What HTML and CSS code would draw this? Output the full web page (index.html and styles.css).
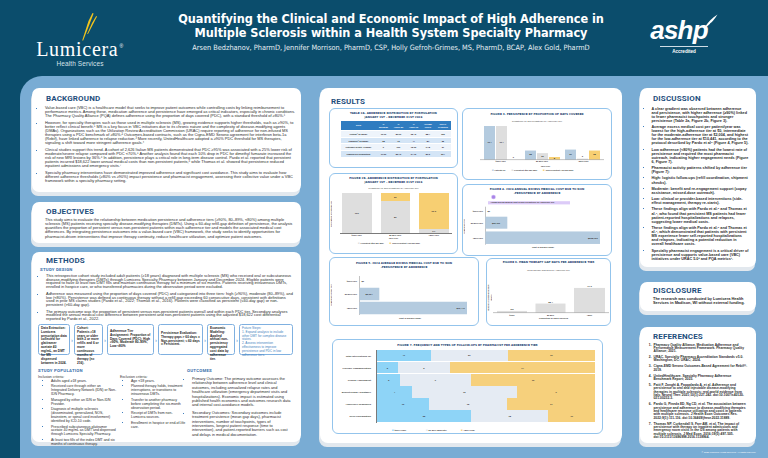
FILE: index.html
```html
<!DOCTYPE html>
<html lang="en">
<head>
<meta charset="utf-8">
<title>Quantifying the Clinical and Economic Impact of High Adherence in MS</title>
<link rel="stylesheet" href="styles.css">
</head>
<body>
<div class="poster">
  <header class="top">
    <div class="logo">
      <svg class="bolt" viewBox="0 0 20 28" width="20" height="28">
        <polygon points="15.5,0 16.6,0.6 6.2,27.5 5.2,27.5 11.5,8" fill="#f4c51c"/>
        <polygon points="19.2,3 20,3.6 11,21 10.2,21 15,10" fill="#f4c51c"/>
      </svg>
      <div class="lumi">Lumicera<span class="reg">®</span></div>
      <div class="hs">Health Services</div>
    </div>
    <div class="titlebox">
      <h1 class="title">Quantifying the Clinical and Economic Impact of High Adherence in<br>Multiple Sclerosis within a Health System Specialty Pharmacy</h1>
      <p class="authors">Arsen Bedzhanov, PharmD, Jennifer Morrison, PharmD, CSP, Holly Gefroh-Grimes, MS, PharmD, BCAP, Alex Gold, PharmD</p>
    </div>
    <div class="ashp">
      <div class="ashp-mark">
        <span class="ashp-word">ashp</span>
        <svg class="quill" viewBox="0 0 14 14" width="14" height="14">
          <path d="M1 13 C4 8 8 4 13.5 0.5 C11 4.5 8 8.5 3 12.5 Z" fill="#fff"/>
          <path d="M6 9.5 L9.5 9" stroke="#0b4d6c" stroke-width="0.7"/>
        </svg>
      </div>
      <div class="acc-line"></div>
      <div class="acc">Accredited</div>
    </div>
  </header>

  <main class="panel">
    <!-- LEFT COLUMN -->
    <section class="col-left">
      <div class="card card-bg">
        <h2 class="h2">BACKGROUND</h2>
        <ul class="bl bg-list">
          <li>Value-based care (VBC) is a healthcare model that seeks to improve patient outcomes while controlling costs by linking reimbursement to performance metrics. Among these, medication adherence and persistence have emerged as critical indicators, especially in chronic conditions. The Pharmacy Quality Alliance (PQA) defines adherence using the proportion of days covered (PDC), with a standard threshold of ≥80%.¹</li>
          <li>However, for specialty therapies such as those used in multiple sclerosis (MS), growing evidence supports higher thresholds, such as ≥90%, to better reflect clinical benefit.⁵ MS is a key focus in VBC initiatives due to its chronic nature and the complexity of disease-modifying agents (DMAs). Organizations such as the Utilization Review Accreditation Commission (URAC) require reporting of adherence for non-infused MS therapies using a PDC benchmark of ≥80%.² Outcomes-based contracts, such as the Cigna-EMD Serono agreement for interferon beta-1a (Rebif), have linked adherence to relapse reduction.³ More recently, UnitedHealthcare adopted a ≥90% PDC threshold for MS therapies, signaling a shift toward more stringent adherence goals.⁴</li>
          <li>Clinical studies support this trend. A cohort of 2,626 Italian MS patients demonstrated that PDC ≥95% was associated with a 25% lower risk of moderate/severe relapse compared with PDC &lt;70%.⁵ Another analysis found that each 10% drop in PDC for dimethyl fumarate increased the risk of new MRI lesions by 36%.⁶ In addition, persistence plays a critical role in long-term disease control. Pardo et al. reported that persistent patients incurred $18,622 lower annual medical costs than non-persistent patients,⁶ while Thomas et al. showed that persistence reduced inpatient admissions and emergency visits.⁷</li>
          <li>Specialty pharmacy interventions have demonstrated improved adherence and significant cost avoidance. This study aims to evaluate how different adherence thresholds (≥80% vs ≥90%) impact persistence and pharmacist engagement, assessing their collective value under a VBC framework within a specialty pharmacy setting.</li>
        </ul>
      </div>

      <div class="card card-obj">
        <h2 class="h2">OBJECTIVES</h2>
        <p class="txt obj-txt">This study aims to evaluate the relationship between medication persistence and adherence tiers (≥90%, 80–89%, &lt;80%) among multiple sclerosis (MS) patients receiving specialty disease-modifying therapies (DMTs). Using a 60-day refill-gap definition of persistence, the analysis quantifies the proportion of persistent versus non-persistent patients within each adherence tier and models the associated medical cost differences. By integrating persistence outcomes into a value-based care (VBC) framework, the study seeks to identify opportunities for pharmacist-driven interventions that improve therapy continuity, reduce healthcare utilization, and optimize patient outcomes.</p>
      </div>

      <div class="card card-meth">
        <h2 class="h2">METHODS</h2>
        <h3 class="h3">STUDY DESIGN</h3>
        <ul class="bl sd-list">
          <li>This retrospective cohort study included adult patients (≥18 years) diagnosed with multiple sclerosis (MS) who received oral or subcutaneous disease-modifying therapies (DMTs) through Lumicera Specialty Pharmacy between January and December 2024. Eligible patients were required to have at least two DMT fills and maintain continuous therapy for a minimum of six months. Patients receiving intravenous DMTs, enrolled in hospice care, or who transferred pharmacies during the observation period were excluded.</li>
          <li>Adherence was measured using the proportion of days covered (PDC) and categorized into three tiers: high (≥90%), moderate (80–89%), and low (&lt;80%). Persistence was defined as continuous therapy without a refill gap exceeding 60 consecutive days, consistent with definitions used in prior MS claims studies (Pardo et al., 2022; Thomas et al., 2016). Patients were classified as persistent (≤60-day gap) or non-persistent (&gt;60-day gap).</li>
          <li>The primary outcome was the proportion of persistent versus non-persistent patients overall and within each PDC tier. Secondary analyses modeled the annual medical cost difference between persistent and non-persistent patients using the adjusted $18,622 cost differential reported by Pardo et al., 2022.</li>
        </ul>

        <div class="flow">
          <div class="fbox w1">Data Extraction: Lumicera prescription data collected for glatiramer acetate 40 mg/mL, an DMT for MS dispensed between in 2024.</div>
          <div class="farrow">›</div>
          <div class="fbox w2">Cohort: Patients ≥18 years or older with 2 or more refills and 6 or more continuous months of therapy (n= 216).</div>
          <div class="farrow">›</div>
          <div class="fbox w3 mid-v">Adherence Tier Assignment: Proportion of Days Covered (PDC): High ≥90%, Moderate 80–89%, Low &lt;80%</div>
          <div class="farrow">›</div>
          <div class="fbox w4 mid-v">Persistence Evaluation: Therapy gaps &gt; 60 days = Non-persistent; ≤ 60 days = Persistent.</div>
          <div class="farrow">›</div>
          <div class="fbox w5">Economic Modeling: Applied annual non-persistency aggregated cost data by adherence tier.</div>
          <div class="farrow">›</div>
          <div class="fbox w6 future">Future Steps:<br>1. Expand analysis to include other DMT for complex disease states.<br>2. Assess intervention effectiveness to improve persistence and PDC in low adherence tiers.</div>
        </div>

        <div class="pop">
          <div class="pop-left">
            <h3 class="h3">STUDY POPULATION</h3>
            <div class="crit">
              <div class="crit-col inc">
                <p class="crit-label">Inclusion criteria:</p>
                <ul class="bl crit-list">
                  <li>Adults aged ≥18 years.</li>
                  <li>Received care through either an Integrated Delivery Network (IDN) or Non-IDN Pharmacy.</li>
                  <li>Managed by either an IDN or Non-IDN Provider.</li>
                  <li>Diagnosis of multiple sclerosis (disseminated, generalized, NOS, brainstem, or spinal cord involvement) identified by ICD-10 code.</li>
                  <li>Prescribed subcutaneous glatiramer acetate 40 mg/mL as DMT and dispensed through Lumicera Specialty Pharmacy.</li>
                  <li>At least two fills of the index DMT and six months of continuous therapy.</li>
                </ul>
              </div>
              <div class="crit-col exc">
                <p class="crit-label">Exclusion criteria:</p>
                <ul class="bl crit-list">
                  <li>Age &lt;18 years.</li>
                  <li>Planned therapy holds, treatment interruptions, or transitions to intravenous DMTs.</li>
                  <li>Transfer to another pharmacy before completing the six-month observation period.</li>
                  <li>Receipt of DMTs from non-Lumicera sources.</li>
                  <li>Enrollment in hospice or end-of-life care.</li>
                </ul>
              </div>
            </div>
          </div>
          <div class="pop-right">
            <h3 class="h3">OUTCOMES</h3>
            <ul class="bl out-list">
              <li>Primary Outcome: The primary outcome assesses the relationship between adherence level and clinical outcomes, including annualized relapse rates and healthcare utilization (emergency department visits and hospitalizations). Economic impact is estimated using published health economics and outcomes research data and internal cost-avoidance models.</li>
              <li>Secondary Outcomes: Secondary outcomes include treatment persistence (mean gap days), pharmacist interventions, number of touchpoints, types of interventions, longest patient response (time to intervention), and patient-reported barriers such as cost and delays in medical documentation.</li>
            </ul>
          </div>
        </div>
      </div>
    </section>

    <!-- MIDDLE COLUMN -->
    <section class="col-mid">
      <h2 class="h2 res-h">RESULTS</h2>

      <!-- plot marks drawn beneath figures 3-6 (same grid cells) -->
      <svg class="marks mk-3" viewBox="0 0 150 72" width="150" height="72">
        <rect x="22" y="18" width="11" height="33.6" fill="#b4cbdf"/>
        <rect x="34" y="18" width="11" height="33.6" fill="#dedede"/>
        <rect x="63" y="42.55" width="11" height="9.05" fill="#b4cbdf"/>
        <rect x="75" y="45.13" width="11" height="6.47" fill="#dedede"/>
        <rect x="87" y="49.01" width="11" height="2.59" fill="#f7cf72"/>
        <rect x="103" y="41.58" width="11" height="10.02" fill="#b4cbdf"/>
        <rect x="115" y="50.63" width="11" height="0.97" fill="#dedede"/>
        <rect x="127" y="42.55" width="11" height="9.05" fill="#f7cf72"/>
        <rect x="18" y="51.6" width="124" height="0.45" fill="#7a7a7a"/>
      </svg>
      <svg class="marks mk-4" viewBox="0 0 150 72" width="150" height="72">
        <circle cx="31.5" cy="13" r="2.3" fill="#cdb5f4"/>
        <circle cx="31.5" cy="13" r="1.6" fill="#a884e6"/>
        <rect x="26" y="17.2" width="82" height="3.2" fill="#dccbf8"/>
        <rect x="23" y="22.7" width="0.45" height="38" fill="#7a7a7a"/>
        <rect x="23.4" y="32.7" width="21.9" height="12" fill="#b4cbdf"/>
        <rect x="23.4" y="47.45" width="114.6" height="12.5" fill="#b4cbdf"/>
      </svg>
      <svg class="marks mk-5" viewBox="0 0 150 69" width="150" height="69">
        <rect x="30" y="19" width="0.45" height="39" fill="#7a7a7a"/>
        <rect x="30.4" y="30.75" width="19.9" height="12.5" fill="#b4cbdf"/>
        <rect x="30.4" y="44.75" width="107.6" height="12.5" fill="#b4cbdf"/>
      </svg>
      <svg class="marks mk-6" viewBox="0 0 126 69" width="126" height="69">
        <rect x="11" y="53.94" width="30" height="1.66" fill="#dedede"/>
        <rect x="49.5" y="46.54" width="30" height="9.06" fill="#dedede"/>
        <rect x="88" y="30.94" width="31" height="24.66" fill="#dedede"/>
        <rect x="7" y="55.6" width="116" height="0.45" fill="#7a7a7a"/>
      </svg>

      <div class="fig fig-table">
        <div class="ft">TABLE 2A. ADHERENCE DISTRIBUTION BY FORMULATION<br>JANUARY 1ST – DECEMBER 31ST 2024</div>
        <table class="tbl">
          <thead>
            <tr><th class="c-drug">Drug</th><th>%<br>Below 80</th><th>%<br>Above 80</th><th>%<br>Above 90</th><th>Average<br>PDC%</th><th>TOTAL<br>PATIENTS</th></tr>
          </thead>
          <tbody>
            <tr><td class="c-drug">Glatopa® 20 mg/mL</td><td>19.10</td><td>80.90</td><td>65.40</td><td>88.4</td><td>152</td></tr>
            <tr><td class="c-drug">Copaxone® 20 mg/mL</td><td>28</td><td>72</td><td>44</td><td>87</td><td>25</td></tr>
            <tr><td class="c-drug">Glatiramer acetate 40 mg/mL</td><td>0</td><td>100</td><td>75.00</td><td>94.8</td><td>27</td></tr>
            <tr><td class="c-drug">Combined all formulations</td><td>17.60</td><td>82.40</td><td>64.70</td><td>89.3</td><td>204</td></tr>
          </tbody>
        </table>
      </div>

      <div class="fig fig-3">
        <div class="ft">FIGURE 3. PERSISTENCE BY PROPORTION OF DAYS COVERED</div>
        <div class="cs f3-sub">Persistence vs. Non-Persistence by Adherence Tier</div>
        <div class="f3-body">
          <div class="vp f3-plot">
            <div class="scol n11"><div class="seg top" style="flex-grow:3">&nbsp;</div><div class="seg" style="flex-grow:104">104</div></div>
            <div class="scol n11"><div class="seg top" style="flex-grow:3">&nbsp;</div><div class="seg" style="flex-grow:104">104</div></div>
            <div class="scol n11"><div class="seg top" style="flex-grow:107">0</div></div>
            <div class="scol n11 gs"><div class="seg top" style="flex-grow:79">&nbsp;</div><div class="seg" style="flex-grow:28">28</div></div>
            <div class="scol n11"><div class="seg top" style="flex-grow:87">&nbsp;</div><div class="seg" style="flex-grow:20">20</div></div>
            <div class="scol n11"><div class="seg top" style="flex-grow:99">&nbsp;</div><div class="seg" style="flex-grow:8">8</div></div>
            <div class="scol n11 gs2"><div class="seg top" style="flex-grow:76">&nbsp;</div><div class="seg" style="flex-grow:31">31</div></div>
            <div class="scol n11"><div class="seg top" style="flex-grow:104">3</div><div class="seg" style="flex-grow:3">&nbsp;</div></div>
            <div class="scol n11"><div class="seg top" style="flex-grow:79">&nbsp;</div><div class="seg" style="flex-grow:28">28</div></div>
          </div>
        </div>
        <div class="xcats f3-cats"><span>≥90% PDC</span><span>80-89% PDC</span><span>&lt;80% PDC</span></div>
        <div class="axt f3-ax">PDC Tier</div>
        <div class="legend f3-leg">
          <span class="lg"><span class="sq k-pat">■</span>Patients (n)</span>
          <span class="lg"><span class="sq k-per">■</span>Persistent (≤60 day gap)</span>
          <span class="lg"><span class="sq k-non">■</span>Non-Persistent (&gt;60 day gap)</span>
        </div>
      </div>

      <div class="fig fig-2b">
        <div class="ft">FIGURE 2B. ADHERENCE DISTRIBUTION BY FORMULATION<br>JANUARY 1ST – DECEMBER 31ST 2024</div>
        <div class="cs f2-sub">Persistence vs. Non-Persistence by Adherence Tier</div>
        <div class="f2-body">
          <div class="ytitle f2-yt">Percentage of Patients (%)</div>
          <div class="vp f2-plot">
            <div class="scol"><div class="seg c-per" style="flex-grow:100">100</div></div>
            <div class="scol"><div class="seg c-non" style="flex-grow:20">20</div><div class="seg c-per" style="flex-grow:80">80</div></div>
            <div class="scol"><div class="seg c-non" style="flex-grow:90.3">90.3</div><div class="seg c-per" style="flex-grow:9.7">9.7</div></div>
          </div>
        </div>
        <div class="xcats f2-cats"><span>≥90% PDC</span><span>80-89% PDC</span><span>&lt;80% PDC</span></div>
        <div class="axt">PDC Tier</div>
        <div class="legend f2-leg">
          <span class="lg"><span class="sq k-per">■</span>Persistent (≤60 day gap)</span>
          <span class="lg"><span class="sq k-non">■</span>Non-Persistent (&gt;60 day gap)</span>
        </div>
      </div>

      <div class="fig fig-4">
        <div class="ft">FIGURE 4. 2024 ANNUAL EXCESS MEDICAL COST DUE TO NON<br>-PERSISTENCE BY ADHERENCE</div>
        <div class="f4-badge"><span class="hl">Annual Excess Medical Cost of Non-Persistence by Adherence Tier</span></div>
        <div class="hchart f4-ch">
          <div class="ytitle f4-yt">Adherence Tier</div>
          <div class="hrows f4-rows">
            <div class="hrow h8"><span class="hcat">≥90% PDC</span><div class="harea"><span class="hv">$0</span></div></div>
            <div class="hrow h16"><span class="hcat">80-89% PDC</span><div class="harea"><div class="seg hf" style="flex-grow:22">$39,110</div><div class="seg hf" style="flex-grow:102">&nbsp;</div></div></div>
            <div class="hrow h14"><span class="hcat">&lt;80% PDC</span><div class="harea"><div class="seg hf end" style="flex-grow:115">$205,760</div><div class="seg hf" style="flex-grow:9">&nbsp;</div></div></div>
          </div>
        </div>
        <div class="axt f4-ax">Cost in Dollars (USD)</div>
      </div>

      <div class="fig fig-5">
        <div class="ft">FIGURE 5. 2024 AVERAGE EXCESS MEDICAL COST DUE TO NON<br>-PERSISTENCE BY ADHERENCE</div>
        <div class="hchart f5-ch">
          <div class="ytitle f5-yt">Adherence (PDC) Tier</div>
          <div class="hrows f5-rows">
            <div class="hrow h11"><span class="hcat">≥90% PDC</span><div class="harea"><span class="hv">$0</span></div></div>
            <div class="hrow h14"><span class="hcat">80-89% PDC</span><div class="harea"><div class="seg hf" style="flex-grow:20">$2,004</div><div class="seg hf" style="flex-grow:99">&nbsp;</div></div></div>
            <div class="hrow h14"><span class="hcat">&lt;80% PDC</span><div class="harea"><div class="seg hf end" style="flex-grow:108">$10,441</div><div class="seg hf" style="flex-grow:11">&nbsp;</div></div></div>
          </div>
        </div>
        <div class="axt f5-ax">Cost in Dollars (USD)</div>
      </div>

      <div class="fig fig-6">
        <div class="ft">FIGURE 6. MEAN THERAPY GAP DAYS PER ADHERENCE TIER</div>
        <div class="cs f6-sub">Mean Therapy Gap Days by Adherence Tier</div>
        <div class="f6-body">
          <div class="ytitle f6-yt">Number of Mean Gap Days (Days)</div>
          <div class="vp f6-plot">
            <div class="scol n30"><div class="seg top" style="flex-grow:87.6">5.2</div><div class="seg" style="flex-grow:5.2">&nbsp;</div></div>
            <div class="scol n30"><div class="seg top" style="flex-grow:64.4">28.4</div><div class="seg" style="flex-grow:28.4">&nbsp;</div></div>
            <div class="scol n31"><div class="seg top" style="flex-grow:15.5">77.3</div><div class="seg" style="flex-grow:77.3">&nbsp;</div></div>
          </div>
        </div>
        <div class="xcats f6-cats"><span class="n30">≥90%</span><span class="n30">80-89%</span><span class="n31">&lt;80%</span></div>
        <div class="axt f6-ax">Proportion of Days Covered</div>
      </div>

      <div class="fig fig-7">
        <div class="ft">FIGURE 7. FREQUENCY AND TYPES OF FOLLOW-UPS BY PHARMACIST PER ADHERENCE TIER</div>
        <div class="srows">
          <div class="srow"><span class="scat">Total Interventions (N)</span><div class="sarea"><div class="seg c-hi" style="flex-grow:41">41</div><div class="seg c-mo" style="flex-grow:59">59</div><div class="seg c-lo" style="flex-grow:67">67</div></div></div>
          <div class="srow"><span class="scat">Provider Communication</span><div class="sarea"><div class="seg c-hi" style="flex-grow:2">2</div><div class="seg c-mo" style="flex-grow:5">5</div><div class="seg c-lo" style="flex-grow:14">14</div></div></div>
          <div class="srow"><span class="scat">Clinical Assessment</span><div class="sarea"><div class="seg c-hi" style="flex-grow:3">3</div><div class="seg c-mo" style="flex-grow:9">9</div><div class="seg c-lo" style="flex-grow:16">16</div></div></div>
          <div class="srow"><span class="scat">Benefit/Copay Assistance</span><div class="sarea"><div class="seg c-hi" style="flex-grow:4">4</div><div class="seg c-mo" style="flex-grow:12">12</div><div class="seg c-lo" style="flex-grow:9">9</div></div></div>
          <div class="srow"><span class="scat">Adherence Reminders</span><div class="sarea"><div class="seg c-hi" style="flex-grow:10">10</div><div class="seg c-mo" style="flex-grow:15">15</div><div class="seg c-lo" style="flex-grow:17">17</div></div></div>
          <div class="srow"><span class="scat">Refill Coordination</span><div class="sarea"><div class="seg c-hi" style="flex-grow:22">22</div><div class="seg c-mo" style="flex-grow:18">18</div><div class="seg c-lo" style="flex-grow:11">11</div></div></div>
        </div>
        <div class="legend f7-leg">
          <span class="lg l1"><span class="sq k-hi">■</span>≥90% (High)</span>
          <span class="lg l2"><span class="sq k-mo">■</span>80–89% (Moderate)</span>
          <span class="lg"><span class="sq k-lo">■</span>&lt;80% (Low)</span>
        </div>
      </div>
    </section>

    <!-- RIGHT COLUMN -->
    <section class="col-right">
      <div class="card card-disc">
        <h2 class="h2">DISCUSSION</h2>
        <ul class="bl disc-list">
          <li>A clear gradient was observed between adherence and persistence, with higher adherence (≥90%) linked to fewer pharmacist touchpoints and stronger persistence (Table 2a, Figure 2b, Figure 3).</li>
          <li>Average excess medical cost per patient/year was lowest for the high-adherence tier at $0, intermediate for the moderate-adherence tier at $2,004, and highest for the low-adherence tier at $10,441, according to the protocol described by Pardo et al⁶ (Figure 4, Figure 5).</li>
          <li>Low adherence (&lt;80%) patients had the lowest rate of persistence and required the most pharmacist outreach, indicating higher engagement needs (Figure 6, Figure 7).</li>
          <li>Pharmacist activity patterns shifted by adherence tier (Figure 7):</li>
          <li>High: logistic follow-ups (refill coordination, shipment checks).</li>
          <li>Moderate: benefit and re-engagement support (copay assistance, missed-dose outreach).</li>
          <li>Low: clinical or provider-based interventions (side-effect management, therapy re-starts).</li>
          <li>These findings align with Pardo et al.⁶ and Thomas et al.⁷, who found that persistent MS patients had fewer patient-reported hospitalizations and relapses, suggesting lower medical costs.</li>
          <li>These findings align with Pardo et al.⁶ and Thomas et al.⁷, which demonstrated that patients with persistent MS experience fewer self-reported hospitalizations and relapses, indicating a potential reduction in overall healthcare costs.</li>
          <li>Specialty pharmacist engagement is a critical driver of persistence and supports value-based care (VBC) initiatives under URAC 5.0² and PQA metrics¹.</li>
        </ul>
      </div>

      <div class="card card-discl">
        <h2 class="h2">DISCLOSURE</h2>
        <p class="txt discl-txt">The research was conducted by Lumicera Health Services in Madison, WI without external funding.</p>
      </div>

      <div class="card card-ref">
        <h2 class="h2">REFERENCES</h2>
        <ol class="ref-list">
          <li>Pharmacy Quality Alliance. Medication Adherence and Performance Measurement Framework. Pharmacy Quality Alliance; 2021.</li>
          <li>URAC. Specialty Pharmacy Accreditation Standards v5.0. Washington, DC: URAC; 2024.</li>
          <li>Cigna-EMD Serono Outcomes-Based Agreement for Rebif®. 2019.</li>
          <li>UnitedHealthcare. Specialty Pharmacy Adherence Benchmark Report; 2023.</li>
          <li>Patti F, Zanghì A, Pappalardo A, et al. Adherence and persistence to oral and injectable disease-modifying therapies in multiple sclerosis: real-world evidence from Italy. Neurol Ther. 2021;10(1):227-242. doi:10.1007/s40120-021-00232-3.</li>
          <li>Pardo G, Pineda ED, Ng CD, et al. The association between persistence and adherence to disease-modifying therapies and healthcare resource utilization and costs in patients with multiple sclerosis. J Health Econ Outcomes Res. 2022;9(1):111-116. doi:10.36469/jheor.2022.31889.</li>
          <li>Thomas NP, Curkendall S, Farr AM, et al. The impact of persistence with therapy on inpatient admissions and emergency room visits in the US among patients with multiple sclerosis. J Med Econ. 2016;19(5):497-505. doi:10.3111/13696998.2016.1138964.</li>
        </ol>
      </div>
      <p class="copy">© 2025 Lumicera Health Services. All rights reserved.</p>
    </section>
  </main>
</div>
</body>
</html>
```

FILE: styles.css
```css
* { box-sizing: border-box; margin: 0; padding: 0; }
html, body { width: 768px; height: 458px; overflow: hidden; }
body { background: #0b4d6c; font-family: "Liberation Sans", Arial, sans-serif; color: #222; }

.poster { width: 768px; height: 458px; display: flex; flex-direction: column; }

/* ---------- header ---------- */
.top { height: 76px; flex: none; display: flex; color: #fff; }
.logo { width: 100px; margin-left: 30px; padding-top: 13px; display: flex; flex-direction: column; align-items: center; }
.bolt { display: block; align-self: flex-start; margin-left: 47px; width: 20px; height: 28px; margin-bottom: -3.5px; }
.lumi { font-family: "Liberation Serif", "Times New Roman", serif; font-size: 20px; line-height: 17px; letter-spacing: 0.7px; color: #fff; }
.reg { font-size: 5px; vertical-align: 8px; margin-left: 1px; font-family: "Liberation Sans", sans-serif; }
.hs { font-size: 6.5px; line-height: 7px; margin-top: 2px; color: #d6e2ea; letter-spacing: 0.1px; }

.titlebox { flex: 1; text-align: center; padding-top: 12px; }
.title { font-family: "DejaVu Sans Condensed", "Liberation Sans", sans-serif; font-weight: 700; font-size: 12.6px; line-height: 14px; letter-spacing: -0.05px; color: #fff; }
.authors { font-family: "DejaVu Sans Condensed", "Liberation Sans", sans-serif; font-size: 7.3px; line-height: 7px; margin-top: 3.5px; color: #e9f0f4; }

.ashp { width: 64px; margin-right: 52px; padding-top: 20px; display: flex; flex-direction: column; align-items: center; }
.ashp-mark { display: flex; align-items: flex-start; height: 24px; }
.ashp-word { font-family: "Liberation Sans", Arial, sans-serif; font-weight: 700; font-style: italic; font-size: 26px; line-height: 20px; letter-spacing: -0.8px; color: #fff; }
.quill { width: 14px; height: 14px; margin-left: -4px; margin-top: -6px; }
.acc-line { width: 48px; height: 0.6px; background: #cfdde6; margin-top: 2px; }
.acc { font-size: 4.6px; line-height: 5px; margin-top: 2px; font-weight: 700; color: #fff; }

/* ---------- panel ---------- */
.panel { flex: 1; margin-left: 20px; background: #79acd4; border-top-left-radius: 22px; display: flex; padding: 12px 12px 0 12px; }

.card { background: #fff; border-radius: 7px; box-shadow: -1px 4px 0 #e2e8ee; }

.h2 { font-family: Roboto, "Liberation Sans", sans-serif; font-weight: 700; font-size: 8px; line-height: 8px; letter-spacing: 0.15px; color: #1f4f7d; }
.h3 { font-family: Roboto, "Liberation Sans", sans-serif; font-weight: 700; font-size: 4.3px; line-height: 5px; letter-spacing: 0.25px; color: #3b6fab; }

.txt { font-size: 3.95px; line-height: 4.15px; color: #2a2a2a; }
.bl { list-style: square; color: #2a2a2a; }
.bl li::marker { color: #3f7fc0; }

/* left column */
.col-left { width: 269px; display: flex; flex-direction: column; flex: none; }
.card-bg { height: 104px; padding: 7px 5px 0 9px; }
.card-bg .h2 { margin-left: 5px; }
.bg-list { margin-top: 3px; padding-left: 4px; font-size: 3.95px; line-height: 3.95px; }
.bg-list li + li { margin-top: 3.2px; }

.card-obj { height: 41px; margin-top: 10px; padding: 6px 5px 0 13px; }
.card-obj .h2 { margin-left: 1px; }
.obj-txt { margin-top: 2px; }

.card-meth { height: 190px; margin-top: 9px; padding: 5px 8px 0 6px; }
.card-meth .h2 { margin-left: 8px; }
.card-meth > .h3 { margin-top: 2px; margin-left: 2px; }
.sd-list { margin-top: 2px; height: 43px; padding-left: 8px; font-size: 3.95px; line-height: 3.7px; }
.sd-list li + li { margin-top: 3px; }

.flow { display: flex; margin-top: 7px; height: 31px; }
.fbox { border: 0.8px solid #7fb0e0; border-radius: 2.5px; padding: 1.6px 2px; font-size: 3.2px; line-height: 3.95px; font-weight: 700; color: #222; }
.fbox.mid-v { display: flex; align-items: center; }
.fbox.future { color: #3f7fc0; font-weight: 400; }
.w1 { width: 32px; } .w2 { width: 29px; } .w3 { width: 47px; } .w4 { width: 45px; } .w5 { width: 28px; } .w6 { width: 54px; }
.farrow { width: 4px; display: flex; align-items: center; justify-content: center; font-size: 6px; line-height: 6px; color: #7fb0e0; font-weight: 700; }

.pop { display: flex; margin-top: 13px; }
.pop-left { width: 149px; flex: none; }
.pop-right { flex: 1; }
.crit { display: flex; margin-top: 1.5px; }
.crit-col.inc { width: 82px; flex: none; padding-right: 3px; }
.crit-col.exc { flex: 1; }
.crit-label { font-size: 3.5px; line-height: 4px; color: #333; }
.crit-list { margin-top: 1.2px; padding-left: 13px; font-size: 3.5px; line-height: 3.9px; }
.exc .crit-list { padding-left: 11px; }
.crit-list li + li { margin-top: 1.7px; }
.out-list { margin-top: 4px; padding-left: 5px; font-size: 3.9px; line-height: 4.4px; }
.out-list li + li { margin-top: 3px; }

/* middle column : grid of figures */
.col-mid {
  width: 302px; height: 355px; margin-left: 19px; flex: none;
  background: #fff; border-radius: 8px; box-shadow: -1px 4px 0 #e2e8ee;
  padding: 10px 0 0 9px;
  display: grid;
  grid-template-columns: 129px 4px 17px 7px 126px;
  grid-template-rows: 8px 2px 60px 5px 7px 4px 70px 2px 1px 69px 13px 95px;
  align-items: start; justify-items: start;
}
.res-h { grid-column: 1 / 6; grid-row: 1 / 2; margin-left: 2px; }

.marks { display: block; }
.mk-3 { grid-column: 3 / 6; grid-row: 3 / 6; }
.mk-4 { grid-column: 3 / 6; grid-row: 7 / 9; }
.mk-5 { grid-column: 1 / 4; grid-row: 10 / 11; }
.mk-6 { grid-column: 5 / 6; grid-row: 10 / 11; }

.fig { background: #fff; border: 1px solid #93c4ec; border-radius: 6px; }
.fig.fig-3, .fig.fig-4, .fig.fig-5, .fig.fig-6 { background: transparent; }
.ft { font-family: "DejaVu Sans", sans-serif; font-weight: 700; font-size: 2.75px; line-height: 3.8px; color: #1d3f6f; text-align: center; }

/* chart parts */
.c-pat { background: #b4cbdf; }
.c-per { background: #dedede; }
.c-non { background: #f7cf72; }
.c-hi { background: #8ed4f7; }
.c-mo { background: #e5ebf3; }
.c-lo { background: #f6d07c; }
.k-pat { color: #b4cbdf; } .k-per { color: #dedede; } .k-non { color: #f7cf72; }
.k-hi { color: #8ed4f7; } .k-mo { color: #dfe6f0; } .k-lo { color: #f6d07c; }

.cs { font-size: 2.2px; line-height: 3px; text-align: center; color: #333; }
.axt { font-size: 2.2px; line-height: 3px; text-align: center; font-weight: 700; color: #333; }
.ytitle { writing-mode: vertical-rl; transform: rotate(180deg); font-size: 2.1px; line-height: 3px; font-weight: 700; text-align: center; color: #333; }
.legend { display: flex; font-size: 2px; line-height: 3px; font-weight: 700; color: #333; }
.lg { display: flex; align-items: center; }
.sq { font-size: 3px; line-height: 3px; margin-right: 0.8px; }
.xcats { display: flex; font-size: 2.1px; line-height: 3px; font-weight: 700; color: #333; }
.xcats span { text-align: center; }

.vp { display: flex; border-bottom: 0.4px solid #7a7a7a; }
.fig-3 .vp, .fig-6 .vp { border-bottom-color: transparent; }
.scol { width: 29.5px; display: flex; flex-direction: column; }
.scol.n11 { width: 11px; }
.scol.n30, .xcats .n30 { width: 30px; }
.scol.n31, .xcats .n31 { width: 31px; }
.seg { flex-basis: 0; display: flex; align-items: center; justify-content: center; font-size: 2.3px; line-height: 2.4px; font-weight: 700; color: #333; min-height: 0; min-width: 0; }
.seg.top { align-items: flex-end; padding-bottom: 0.3px; }

.hchart { display: flex; }
.hrows { display: flex; flex-direction: column; }
.hrow { display: flex; }
.h8 { height: 8px; } .h11 { height: 11px; } .h14 { height: 14px; } .h16 { height: 16px; }
.hcat { width: 16px; flex: none; display: flex; align-items: center; justify-content: flex-end; padding-right: 2px; font-size: 2.1px; font-weight: 700; color: #333; white-space: nowrap; }
.harea { flex: 1; display: flex; align-items: center; }
.hf { height: 12px; white-space: nowrap; }
.h14 .hf { height: 12.5px; }
.hf.end { justify-content: flex-end; padding-right: 2.5px; }
.hv { font-size: 2.3px; font-weight: 700; margin-left: 2.5px; color: #333; }

/* figure blocks */
.fig-table { grid-column: 1 / 2; grid-row: 3 / 4; width: 129px; height: 60px; padding-top: 3px; }

.fig-2b { grid-column: 1 / 2; grid-row: 5 / 8; width: 129px; height: 81px; padding-top: 3px; }
.f2-sub { margin-top: 2.9px; }
.f2-body { display: flex; height: 41px; margin-top: 2.5px; }
.f2-yt { width: 10px; }
.f2-plot { width: 112px; height: 41px; padding-left: 2px; gap: 9px; }
.f2-cats { margin-left: 12px; margin-top: 0.5px; gap: 9px; }
.f2-cats span { width: 29.5px; }
.f2-leg { margin-left: 28px; gap: 6px; margin-top: 2px; }

.fig-3 { grid-column: 3 / 6; grid-row: 3 / 6; width: 150px; height: 72px; padding-top: 4px; }
.f3-sub { margin-top: 3.2px; }
.f3-body { display: flex; height: 35px; margin: 2px 0 0 17px; }
.f3-plot { width: 124px; height: 35px; padding-left: 4px; gap: 1px; }
.f3-plot .gs { margin-left: 5px; }
.f3-plot .gs2 { margin-left: 4px; }
.f3-cats { margin-left: 17px; width: 124px; margin-top: 0.5px; }
.f3-cats span { flex: 1; }
.f3-ax { margin-top: 1.5px; padding-left: 17px; }
.f3-leg { margin-left: 29px; gap: 6px; margin-top: 1px; }

.fig-4 { grid-column: 3 / 6; grid-row: 7 / 9; width: 150px; height: 72px; padding-top: 3px; }
.f4-badge { display: flex; align-items: flex-start; margin-top: -1.2px; height: 10.3px; }
.hl { display: block; margin-top: 6.3px; margin-left: 26px; height: 3.2px; padding: 0 1.5px; font-size: 2px; line-height: 3.2px; font-weight: 700; color: #333; }
.f4-ch { margin-top: 2px; }
.f4-yt { width: 6px; }
.f4-rows { width: 140px; }
.f4-ax { margin-top: 1.5px; padding-left: 12px; }

.fig-5 { grid-column: 1 / 4; grid-row: 10 / 11; width: 150px; height: 69px; padding-top: 4px; }
.f5-ch { margin-top: 6.4px; }
.f5-yt { width: 13px; }
.f5-rows { width: 135px; }
.f5-ax { margin-top: 2.5px; padding-left: 12px; }

.fig-6 { grid-column: 5 / 6; grid-row: 10 / 11; width: 125px; height: 68px; margin-top: 1px; padding-top: 2px; }
.f6-sub { margin-top: 4.7px; }
.f6-body { display: flex; height: 30px; margin-top: 10.5px; }
.f6-yt { width: 6px; height: 30px; }
.f6-plot { width: 116px; height: 30px; padding-left: 4px; gap: 8.5px; }
.f6-cats { margin-left: 10px; margin-top: 1.5px; gap: 8.5px; }
.f6-ax { padding-left: 10px; }

.fig-7 { grid-column: 1 / 6; grid-row: 12 / 13; width: 271px; height: 95px; margin-left: 3px; padding-top: 4px; }
.srows { margin-top: 2.2px; }
.srow { display: flex; height: 12.1px; }
.scat { width: 43px; flex: none; padding-right: 5px; display: flex; align-items: center; justify-content: flex-end; font-size: 2.4px; font-weight: 700; color: #333; white-space: nowrap; }
.sarea { width: 219.4px; display: flex; border-left: 0.4px solid #7a7a7a; padding-bottom: 0.7px; }
.f7-leg { margin-left: 59px; margin-top: 6px; }
.f7-leg .l1 { width: 34px; } .f7-leg .l2 { width: 35px; }

.tbl { margin: 0.6px 0 0 11px; width: 110px; border-collapse: separate; border-spacing: 0 1.1px; font-size: 2.2px; text-align: center; }
.tbl th { background: #2f7cc0; color: #fff; font-weight: 700; height: 9px; line-height: 2.6px; font-size: 2.1px; padding: 0 0.5px; }
.tbl td { height: 5.6px; padding: 0 0.5px; font-weight: 700; color: #222; }
.tbl td.c-drug { font-size: 1.9px; }
.tbl tbody tr:nth-child(odd) td { background: #eef4fb; }
.tbl tbody tr:nth-child(even) td { background: #d4e5f6; }
.tbl .c-drug { width: 35px; }

/* right column */
.col-right { width: 116px; margin-left: 18px; flex: none; display: flex; flex-direction: column; }
.card-disc { height: 179px; padding: 7px 7px 0 8px; }
.card-disc .h2 { margin-left: 5px; }
.disc-list { margin-top: 3.5px; padding-left: 3.5px; font-size: 3.75px; line-height: 4.08px; font-weight: 700; color: #2b2b2b; }
.disc-list li + li { margin-top: 2.2px; }

.card-discl { height: 29px; margin-top: 15px; padding: 5px 7px 0 13px; }
.discl-txt { margin-top: 2px; font-size: 3.9px; line-height: 4.2px; font-weight: 700; }

.card-ref { height: 116px; margin-top: 16px; padding: 6px 8px 0 8px; }
.card-ref .h2 { margin-left: 5px; }
.ref-list { margin-top: 2.5px; padding-left: 4.5px; font-size: 3.3px; line-height: 3.35px; font-weight: 700; color: #2b2b2b; }
.ref-list li { padding-left: 1px; }
.ref-list li + li { margin-top: 2.6px; }

.copy { margin-top: 8px; text-align: right; font-size: 2.3px; line-height: 3px; color: #fff; }
```
